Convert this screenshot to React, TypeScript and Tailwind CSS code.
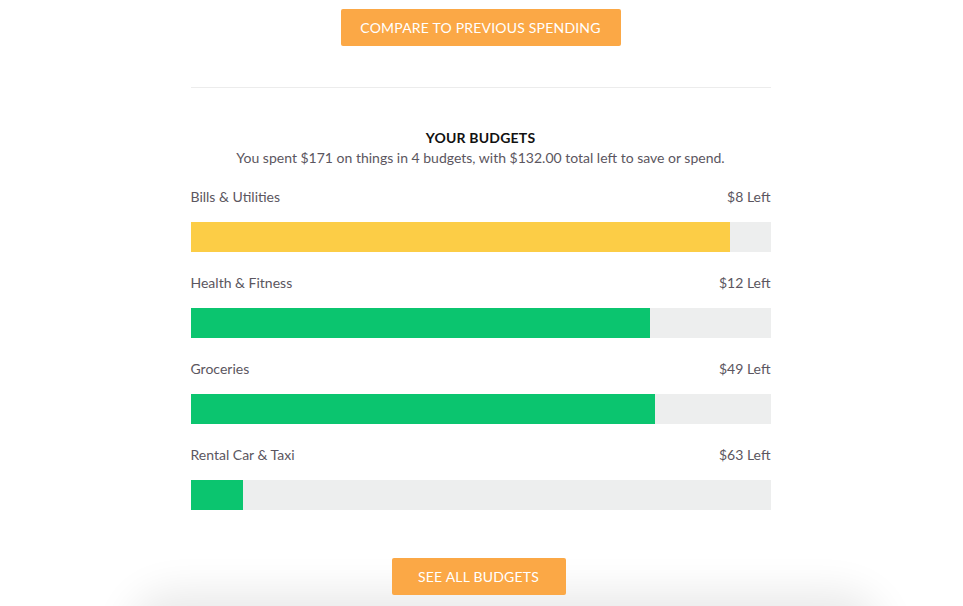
const budgets = [
  { name: "Bills & Utilities", left: "$8 Left", pct: 93.1, color: "bg-[#fccd46]" },
  { name: "Health & Fitness", left: "$12 Left", pct: 79.2, color: "bg-[#0bc56f]" },
  { name: "Groceries", left: "$49 Left", pct: 80, color: "bg-[#0bc56f]" },
  { name: "Rental Car & Taxi", left: "$63 Left", pct: 9.1, color: "bg-[#0bc56f]" },
];

export default function App() {
  return (
    <div className="min-h-screen bg-white overflow-hidden font-['Lato','Open_Sans',sans-serif]">
      <div className="flex flex-col items-center pt-[9px] -translate-x-[1px]">
        <button className="w-[280px] h-[37px] rounded-[2px] bg-[#fba846] text-white text-[14px] tracking-[0.2px] uppercase">
          Compare to previous spending
        </button>

        <div className="w-[580px] mt-[41px] border-t border-[#ececec]" />

        <div className="w-[580px] mt-[41px]">
          <h2 className="text-center text-[14px] leading-[18px] font-bold text-[#111] tracking-[0.2px]">
            YOUR BUDGETS
          </h2>
          <p className="text-center text-[14px] leading-[20px] text-[#5b5660] mt-[1px]">
            You spent $171 on things in 4 budgets, with $132.00 total left to save or spend.
          </p>

          <div className="mt-[19px] flex flex-col gap-[21px]">
            {budgets.map((b) => (
              <div key={b.name}>
                <div className="flex justify-between text-[14px] leading-[20px] text-[#5b5660]">
                  <span>{b.name}</span>
                  <span>{b.left}</span>
                </div>
                <div className="mt-[15px] h-[30px] bg-[#edeeee]">
                  <div className={`h-full ${b.color}`} style={{ width: `${b.pct}%` }} />
                </div>
              </div>
            ))}
          </div>
        </div>

        <button className="mt-[48px] -translate-x-[2px] w-[174px] h-[37px] rounded-[2px] bg-[#fba846] text-white text-[14px] tracking-[0.2px] uppercase">
          See all budgets
        </button>

        <div className="ml-[50px] mt-[11px] w-[725px] h-[200px] rounded-[30px] bg-[#f1f2f2] shadow-[0_0_40px_14px_rgba(0,0,0,0.09)]" />
      </div>
    </div>
  );
}
